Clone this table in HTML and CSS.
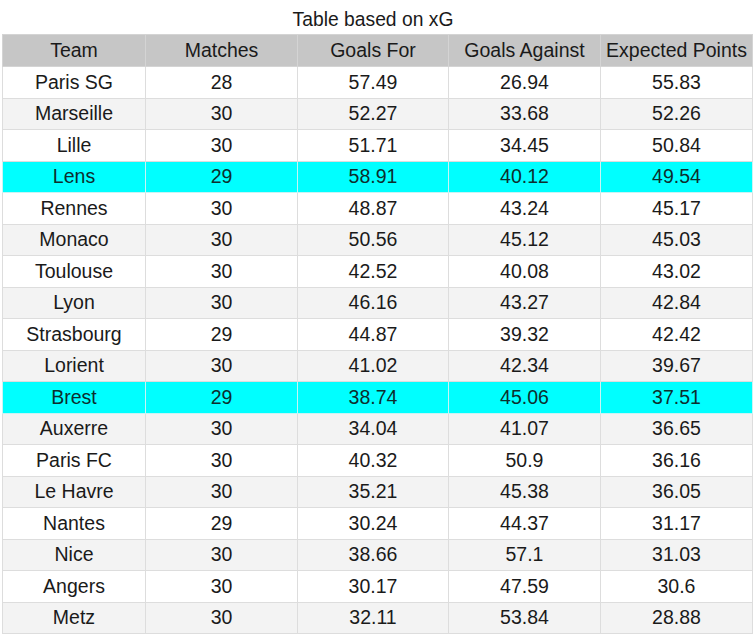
FILE: index.html
```html
<!DOCTYPE html>
<html>
<head>
<meta charset="utf-8">
<link rel="stylesheet" href="styles.css">
</head>
<body>
<div class="wrap">
  <div class="title">Table based on xG</div>
  <table class="xg">
    <colgroup>
      <col class="c1"><col class="c2"><col class="c3"><col class="c4"><col class="c5">
    </colgroup>
    <thead>
      <tr><th>Team</th><th>Matches</th><th>Goals For</th><th>Goals Against</th><th>Expected Points</th></tr>
    </thead>
    <tbody>
      <tr><td>Paris SG</td><td>28</td><td>57.49</td><td>26.94</td><td>55.83</td></tr>
      <tr class="alt"><td>Marseille</td><td>30</td><td>52.27</td><td>33.68</td><td>52.26</td></tr>
      <tr><td>Lille</td><td>30</td><td>51.71</td><td>34.45</td><td>50.84</td></tr>
      <tr class="hl"><td>Lens</td><td>29</td><td>58.91</td><td>40.12</td><td>49.54</td></tr>
      <tr><td>Rennes</td><td>30</td><td>48.87</td><td>43.24</td><td>45.17</td></tr>
      <tr class="alt"><td>Monaco</td><td>30</td><td>50.56</td><td>45.12</td><td>45.03</td></tr>
      <tr><td>Toulouse</td><td>30</td><td>42.52</td><td>40.08</td><td>43.02</td></tr>
      <tr class="alt"><td>Lyon</td><td>30</td><td>46.16</td><td>43.27</td><td>42.84</td></tr>
      <tr><td>Strasbourg</td><td>29</td><td>44.87</td><td>39.32</td><td>42.42</td></tr>
      <tr class="alt"><td>Lorient</td><td>30</td><td>41.02</td><td>42.34</td><td>39.67</td></tr>
      <tr class="hl"><td>Brest</td><td>29</td><td>38.74</td><td>45.06</td><td>37.51</td></tr>
      <tr class="alt"><td>Auxerre</td><td>30</td><td>34.04</td><td>41.07</td><td>36.65</td></tr>
      <tr><td>Paris FC</td><td>30</td><td>40.32</td><td>50.9</td><td>36.16</td></tr>
      <tr class="alt"><td>Le Havre</td><td>30</td><td>35.21</td><td>45.38</td><td>36.05</td></tr>
      <tr><td>Nantes</td><td>29</td><td>30.24</td><td>44.37</td><td>31.17</td></tr>
      <tr class="alt"><td>Nice</td><td>30</td><td>38.66</td><td>57.1</td><td>31.03</td></tr>
      <tr><td>Angers</td><td>30</td><td>30.17</td><td>47.59</td><td>30.6</td></tr>
      <tr class="alt"><td>Metz</td><td>30</td><td>32.11</td><td>53.84</td><td>28.88</td></tr>
    </tbody>
  </table>
</div>
</body>
</html>
```

FILE: styles.css
```css
html, body {
  margin: 0;
  padding: 0;
  background: #ffffff;
}
.wrap {
  padding: 0 2px;
  width: 750px;
  font-family: "Liberation Sans", Arial, sans-serif;
  color: #1a1a1a;
}
.title {
  height: 34px;
  line-height: 39px;
  font-size: 19.3px;
  text-align: center;
  padding-right: 8px;
  box-sizing: border-box;
}
.xg {
  width: 750px;
  table-layout: fixed;
  border-collapse: collapse;
  font-size: 19.5px;
}
.c1 { width: 143px; }
.c2 { width: 152px; }
.c3 { width: 151px; }
.c4 { width: 152px; }
.c5 { width: 152px; }
.xg th, .xg td {
  border: 1px solid #dddddd;
  padding: 0;
  text-align: center;
  font-weight: normal;
  white-space: nowrap;
  overflow: hidden;
}
.xg thead tr {
  height: 32px;
  background: #c6c6c6;
}
.xg th {
  border-color: #d4d4d4;
}
.xg tbody tr {
  height: 31.5px;
  background: #ffffff;
}
.xg tbody tr.alt {
  background: #f3f3f3;
}
.xg tbody tr.hl {
  background: #00ffff;
  color: #0d2e2e;
}
.xg tbody tr.hl td {
  border-color: #c8f4f4;
}
```
